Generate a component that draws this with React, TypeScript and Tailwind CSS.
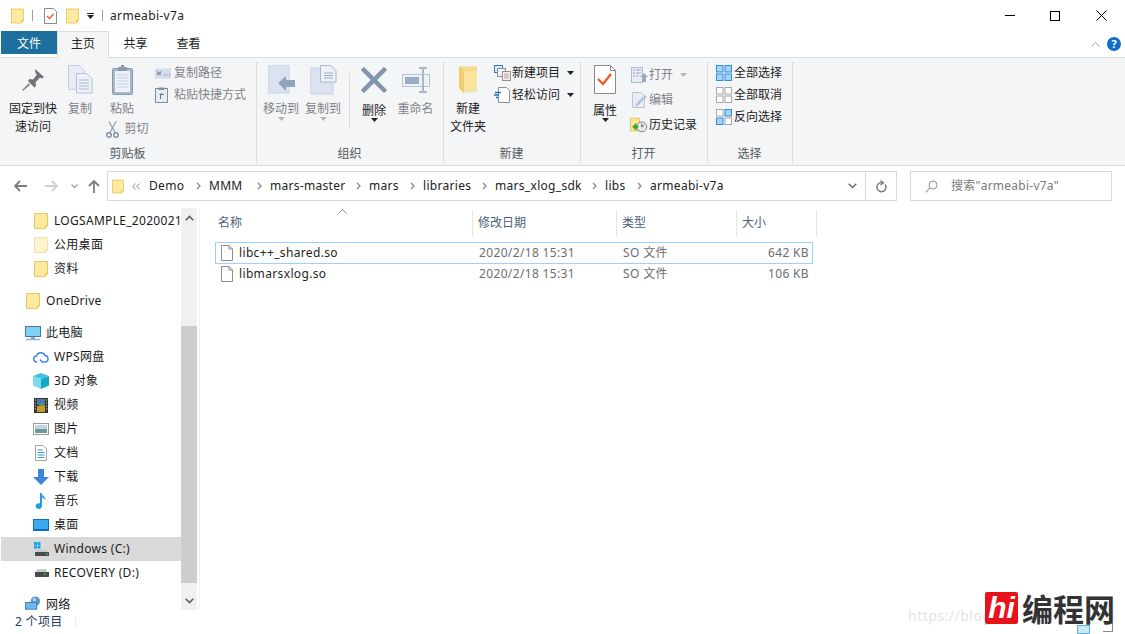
import React from "react";

const Folder = ({ w = 14, h = 16, pale = false }: { w?: number; h?: number; pale?: boolean }) => (
  <svg width={w} height={h} viewBox="0 0 14 16" className="shrink-0">
    <path d="M.5.5h13v12.5h-2v2.5H.5z" fill={pale ? "#fdf3cf" : "#fde9a0"} stroke={pale ? "#f0e2b0" : "#e9c65c"} />
    <path d="M11.5 13h2v-1h-2z M11.5 13v2.5L13.5 13z" fill={pale ? "#f0e2b0" : "#e9c65c"} />
  </svg>
);

const Caret = ({ c = "#222" }: { c?: string }) => (
  <svg width="7" height="4" viewBox="0 0 7 4"><path d="M0 0h7L3.5 4z" fill={c} /></svg>
);

const Pin = () => (
  <svg width="24" height="24" viewBox="0 0 24 24">
    <path d="M14 1l9 8-2 1.500-2-1-4.500 5 .5 3.500-1.500 1.500L7 13l1.500-2 3.500.5 4-5-1.500-1.500z" fill="#6f7278" />
    <path d="M8 15L1 22l1 1 7-6z" fill="#8a8c90" />
  </svg>
);
const CopyBig = () => (
  <svg width="25" height="29" viewBox="0 0 25 29">
    <path d="M.5.5h11l5 5v19H.5z" fill="#e8edf5" stroke="#c6d0e0" />
    <path d="M8.500 8.500h10l5.500 5v14.500H8.500z" fill="#eef2f8" stroke="#b5c1d4" />
    <path d="M11 15h10M11 18h10M11 21h10M11 24h10" stroke="#aab8cc" />
  </svg>
);
const Paste = () => (
  <svg width="21" height="30" viewBox="0 0 21 30">
    <rect x=".5" y="3.500" width="20" height="26" rx="1" fill="#a9b7cb" stroke="#8a9ab2" />
    <rect x="3" y="6" width="15" height="21" fill="#eef2f8" />
    <path d="M5 10h11M5 13h11M5 16h11M5 19h11M5 22h11" stroke="#c6d0e0" />
    <rect x="6" y="2" width="9" height="4" fill="#8a9ab2" />
    <rect x="9" y="0" width="3" height="3" fill="#8a9ab2" />
  </svg>
);
const Scissors = () => (
  <svg width="13" height="17" viewBox="0 0 13 17" fill="none">
    <path d="M3 .5l6 11M10 .5L4 11.500" stroke="#9aa2ae" strokeWidth="1.300" />
    <circle cx="3" cy="14" r="2.300" stroke="#7f8fa8" strokeWidth="1.400" />
    <circle cx="10" cy="14" r="2.300" stroke="#7f8fa8" strokeWidth="1.400" />
  </svg>
);
const PathIcon = () => (
  <svg width="16" height="11" viewBox="0 0 16 11">
    <rect width="16" height="10" y=".5" fill="#d3dced" />
    <path d="M2 3l1 4 1-3 1 3 1-4" stroke="#6f7c92" fill="none" strokeWidth=".7" />
    <path d="M9 7h1M11.500 7h1M14 7h1" stroke="#6f7c92" />
  </svg>
);
const ShortcutPaste = () => (
  <svg width="13" height="16" viewBox="0 0 13 16">
    <rect x=".5" y="1.500" width="12" height="14" fill="#e8edf5" stroke="#7f8da3" />
    <rect x="3.500" y=".5" width="6" height="2.500" fill="#7f8da3" />
    <path d="M5 12V8H4l3-2.500V7h2v1H6v4z" fill="#66758c" />
  </svg>
);
const MoveTo = () => (
  <svg width="27" height="30" viewBox="0 0 27 30">
    <rect x="0" y="0" width="21" height="28" fill="#dbe3f0" stroke="#c8d2e2" />
    <path d="M10 18l8-7v4h9v7h-9v4z" fill="#8fa3bf" />
  </svg>
);
const CopyTo = () => (
  <svg width="27" height="30" viewBox="0 0 27 30">
    <rect x="0" y="3" width="23" height="26" fill="#dbe3f0" stroke="#c8d2e2" />
    <path d="M10.500.5h10l5.500 5V17H10.500z" fill="#eef2f8" stroke="#aab8cc" />
    <path d="M14 8h9M14 10.500h9M14 13h9" stroke="#9cacc3" />
  </svg>
);
const Del = () => (
  <svg width="26" height="26" viewBox="0 0 26 26"><path d="M3 3l20 20M23 3L3 23" stroke="#8494ad" strokeWidth="4.500" strokeLinecap="square" /></svg>
);
const Rename = () => (
  <svg width="28" height="26" viewBox="0 0 28 26" fill="none">
    <rect x=".5" y="7.500" width="27" height="12" fill="#eef2f8" stroke="#b7c4d8" />
    <rect x="3" y="10" width="14" height="7" fill="#9aabc4" />
    <path d="M17 1h8M21 1v24M17 25h8" stroke="#a9b7cb" strokeWidth="2" />
  </svg>
);
const NewFolder = () => (
  <svg width="21" height="28" viewBox="0 0 21 28">
    <path d="M2 .5h17v24H6z" fill="#f6dc8a" />
    <path d="M2 .5L6 5v22.500L1 22V1z" fill="#f0cf6c" />
    <path d="M6 5l13-.5V24.500H6z" fill="#fbe7a4" opacity=".7" />
    <path d="M8 24.500h11l-2 2H6z" fill="#efe2bb" />
  </svg>
);
const NewItem = () => (
  <svg width="17" height="16" viewBox="0 0 17 16" fill="none">
    <rect x=".5" y=".5" width="8" height="7" fill="#dbe9f6" stroke="#3b78b8" />
    <rect x="3.500" y="3.500" width="8" height="8" fill="#eef2f6" stroke="#8a8f98" />
    <rect x="8.500" y="6.500" width="8" height="9" fill="#f3f4f6" stroke="#9a8f8a" />
    <path d="M10 9h5M10 11h5M10 13h5" stroke="#b89a8a" />
  </svg>
);
const EasyAccess = () => (
  <svg width="16" height="16" viewBox="0 0 16 16" fill="none">
    <path d="M4.500.5h8l3 3v12h-11z" fill="#fff" stroke="#8a8f98" />
    <path d="M1 5.500h6M0 8h5M2 10.500h2" stroke="#1d6fc4" strokeWidth="1.300" />
  </svg>
);
const Props = () => (
  <svg width="22" height="29" viewBox="0 0 22 29" fill="none">
    <path d="M.5.5h16l5 5v23H.5z" fill="#fff" stroke="#8b8b8b" />
    <path d="M16.500.5v5h5" stroke="#8b8b8b" />
    <path d="M4 14l5 5 8-10" stroke="#f0582a" strokeWidth="2.400" />
  </svg>
);
const OpenIc = () => (
  <svg width="17" height="16" viewBox="0 0 17 16" fill="none">
    <rect x=".5" y=".5" width="11" height="15" fill="#e8edf5" stroke="#b0bdd0" />
    <path d="M2 3h2M2 6h2M2 9h2M5 3h5M5 6h5M5 9h3" stroke="#95a6bf" />
    <path d="M13 6l4 4h-2v5h-4v-5H9z" fill="#9aaac2" />
  </svg>
);
const EditIc = () => (
  <svg width="15" height="16" viewBox="0 0 15 16" fill="none">
    <path d="M.5.5h9l3 3v12H.5z" fill="#e8edf5" stroke="#bac7d9" />
    <path d="M3 13L13 3l2 1.500L5 14.500z" fill="#b3c2d8" />
  </svg>
);
const HistIc = () => (
  <svg width="21" height="16" viewBox="0 0 21 16" className="mt-px">
    <path d="M.5.5h10v14H.5z" fill="#fde79a" stroke="#e5bf4c" />
    <circle cx="13" cy="10" r="5.500" fill="#e7e7e7" stroke="#7d7d7d" />
    <path d="M13 6.500V10l2.500-1.500" stroke="#555" fill="none" />
    <path d="M2.500 10L7 5.500v2.800h2v3.400H7v2.800z" fill="#3aa82e" />
  </svg>
);
const Grid4 = ({ on }: { on: boolean[] }) => (
  <svg width="16" height="16" viewBox="0 0 16 16">
    {[[0, 0], [8.5, 0], [0, 8.5], [8.5, 8.5]].map(([x, y], i) => (
      <rect key={i} x={x + 0.5} y={y + 0.5} width="6.500" height="6.500" fill={on[i] ? "#a6d3f5" : "#fff"} stroke={on[i] ? "#2b8fe0" : "#a8a8a8"} />
    ))}
  </svg>
);

const Arrow = ({ c, flip }: { c: string; flip?: boolean }) => (
  <svg width="14" height="12" viewBox="0 0 14 12" className={flip ? "rotate-180" : ""}>
    <path d="M1 6h12M6 1L1 6l5 5" stroke={c} strokeWidth="1.800" fill="none" />
  </svg>
);
const Chev = () => (
  <svg width="5" height="8" viewBox="0 0 5 8" className="shrink-0"><path d="M1 1l3 3-3 3" stroke="#8a8a8a" strokeWidth="1.300" fill="none" /></svg>
);
const FileIc = () => (
  <svg width="12" height="16" viewBox="0 0 12 16" className="shrink-0" fill="none">
    <path d="M.5.5h7.500l3.500 3.500v11.500H.5z" fill="#fff" stroke="#8e8e8e" />
    <path d="M8 .5V4h3.500" stroke="#8e8e8e" />
  </svg>
);

const PC = () => (
  <svg width="16" height="15" viewBox="0 0 16 15"><rect x=".5" y=".5" width="15" height="10" fill="#7fd0f7" stroke="#3b7ea8" /><path d="M6 11h4v2H6z" fill="#8fa5b5" /><path d="M1 13.500h14" stroke="#9ab0c0" strokeWidth="1.500" /></svg>
);
const Cloud = () => (
  <svg width="16" height="12" viewBox="0 0 16 12" fill="none"><path d="M4 11a3 3 0 0 1-.5-6A4.500 4.500 0 0 1 12 4.500 3.300 3.300 0 0 1 12.500 11H9L7 8.500" stroke="#3d86ee" strokeWidth="1.500" /></svg>
);
const Cube = () => (
  <svg width="16" height="16" viewBox="0 0 16 16"><path d="M0 3v9.500L8 16V6z" fill="#7fdbe8" /><path d="M8 6v10l8-3.500V3z" fill="#12a8c8" /><path d="M0 3l8 3 8-3-8-3z" fill="#3cc4dc" /></svg>
);
const Film = () => (
  <svg width="14" height="15" viewBox="0 0 14 15"><rect width="14" height="15" fill="#333" /><rect x="3" y="1" width="8" height="6" fill="#4a76b0" /><rect x="3" y="8" width="8" height="6" fill="#c89a2e" /><path d="M5 8l3-4 3 4z" fill="#5f9a4a" /><path d="M1 2h1M1 5h1M1 8h1M1 11h1M12 2h1M12 5h1M12 8h1M12 11h1" stroke="#ddd" /></svg>
);
const Pic = () => (
  <svg width="16" height="12" viewBox="0 0 16 12"><rect x=".5" y=".5" width="15" height="11" fill="#fff" stroke="#9a9a9a" /><rect x="2" y="2" width="12" height="4" fill="#bcd5e5" /><rect x="2" y="6" width="12" height="4" fill="#6f9a92" /></svg>
);
const Doc = () => (
  <svg width="12" height="16" viewBox="0 0 12 16" fill="none"><path d="M.5.5h7.500l3.500 3.500v11.500H.5z" fill="#fff" stroke="#a5a5a5" /><path d="M2.500 5h5M2.500 7.500h7M2.500 10h7M2.500 12.500h7" stroke="#3d9ad8" /></svg>
);
const Down = () => (
  <svg width="16" height="16" viewBox="0 0 16 16"><path d="M5 0h6v8h5l-8 8-8-8h5z" fill="#3c86d8" /></svg>
);
const Note = () => (
  <svg width="12" height="16" viewBox="0 0 12 16"><path d="M5 0h1.500c.5 3 4.500 3.500 4 7.500-.8-2-2.500-2.700-3.500-3V13a3.200 2.800 0 1 1-2-2.500z" fill="#1f9ceb" /></svg>
);
const Desk = () => (
  <svg width="16" height="12" viewBox="0 0 16 12"><rect width="16" height="12" fill="#0f6fb8" /><rect x="1" y="1" width="14" height="9" fill="#3aa9ef" /></svg>
);
const WinDrive = () => (
  <svg width="15" height="15" viewBox="0 0 15 15"><path d="M0 0h3v3H0zM3.500 0h3v3h-3zM0 3.500h3v3H0zM3.500 3.500h3v3h-3z" fill="#19a3e8" /><path d="M2 10l1-2h10l1 2z" fill="#c8c8c8" /><rect x="1" y="10" width="14" height="4" fill="#4a4a4a" /><rect x="12" y="11.500" width="1.500" height="1.500" fill="#4fd64f" /></svg>
);
const Drive = () => (
  <svg width="15" height="9" viewBox="0 0 15 9"><path d="M2 3l1-3h9l1 3z" fill="#c8c8c8" /><rect x="1" y="3" width="14" height="5" fill="#4a4a4a" /><rect x="10" y="4.500" width="1.500" height="1.500" fill="#4fd64f" /></svg>
);
const Net = () => (
  <svg width="17" height="15" viewBox="0 0 17 15"><circle cx="11" cy="5" r="5" fill="#5a97c4" /><circle cx="10" cy="3.500" r="2" fill="#a5cde8" /><rect x=".5" y="6.500" width="12" height="7" fill="#6db9ef" stroke="#3a7db5" /></svg>
);

const Big = ({ w, icon, lines, dim, caret, caretC, low, tail }: { w: number; icon: React.ReactNode; lines: string[]; dim?: boolean; caret?: boolean; caretC?: string; low?: boolean; tail?: React.ReactNode }) => (
  <div className="flex flex-col items-center shrink-0" style={{ width: w }}>
    <div className={`h-[38px] pb-[3px] flex items-center justify-center ${low ? "mb-[2px]" : ""}`}>{icon}</div>
    {lines.map((l) => (
      <div key={l} className={`leading-[18px] whitespace-nowrap ${dim ? "text-[#7f8389]" : "text-[#222]"}`}>{l}</div>
    ))}
    {caret && <div className={`h-[4px] flex items-center ${low ? "-mt-[2px]" : "-mt-[1px]"}`}><Caret c={caretC ?? "#222"} /></div>}
    {tail}
  </div>
);

const Small = ({ icon, text, dim, h = 22, iw, caret, cm, cc, left }: { icon: React.ReactNode; text: string; dim?: boolean; h?: number; iw: number; caret?: boolean; cm?: string; cc?: string; left?: boolean }) => (
  <div className={`flex items-center whitespace-nowrap ${dim ? "text-[#7f8389]" : "text-[#222]"}`} style={{ height: h }}>
    <span className={`flex items-center shrink-0 ${left ? "justify-start" : "justify-center"}`} style={{ width: iw }}>{icon}</span>
    <span>{text}</span>
    {caret && <span className={`${cm} flex`}><Caret c={cc ?? "#222"} /></span>}
  </div>
);

const Group = ({ w, label, children }: { w: number; label: string; children: React.ReactNode }) => (
  <div className="h-full shrink-0 border-r border-[#dcdddf] flex flex-col" style={{ width: w }}>
    <div className="flex-1 flex min-h-0">{children}</div>
    <div className="h-[18px] leading-[18px] text-center pr-px text-[#555a60]">{label}</div>
  </div>
);

const Side = ({ icon, text, lvl = 2, sel, mt, last }: { icon: React.ReactNode; text: string; lvl?: number; sel?: boolean; mt?: boolean; last?: boolean }) => (
  <div className={`shrink-0 flex whitespace-nowrap ${last ? "h-[18px] items-end" : "h-[24px] items-center"} ${sel ? "bg-[#d9d9d9] ml-px" : ""} ${mt ? "mt-[8px]" : ""}`}>
    <span className={`shrink-0 flex items-center justify-center w-[16px] ${lvl === 1 ? (sel ? "ml-[24px]" : "ml-[25px]") : sel ? "ml-[32px]" : "ml-[33px]"}`}>{icon}</span>
    <span className={`ml-[5px] tracking-[0.3px] ${last ? "leading-[12px]" : ""}`}>{text}</span>
  </div>
);

const crumbs: [string, number][] = [
  ["Demo", 47],
  ["MMM", 48],
  ["mars-master", 86],
  ["mars", 41],
  ["libraries", 59],
  ["mars_xlog_sdk", 97],
  ["libs", 32],
];

const Row = ({ name, size, sel }: { name: string; size: string; sel?: boolean }) => (
  <div className={`w-[598px] flex items-center border ${sel ? "h-[22px] border-[#99d1ff]" : "h-[20px] border-transparent"}`}>
    <div className="w-[257px] flex items-center text-[#1f1f1f]">
      <span className="ml-[5px]"><FileIc /></span>
      <span className="ml-[6px] tracking-[0.35px]">{name}</span>
    </div>
    <div className="w-[144px] pl-[6px] text-[#6d6d6d] tracking-[0.35px]">2020/2/18 15:31</div>
    <div className="w-[120px] pl-[6px] text-[#6d6d6d] tracking-[0.35px]">SO 文件</div>
    <div className="flex-1 text-right pr-[3px] text-[#6d6d6d] tracking-[0.35px]">{size}</div>
  </div>
);

const Head = ({ w, t, pl }: { w: number; t: string; pl: string }) => (
  <div className={`h-[26px] shrink-0 border-r border-[#e5e5e5] ${pl} flex items-center text-[#4d6078]`} style={{ width: w }}>{t}</div>
);

export default function App() {
  return (
    <div className="relative w-[1125px] h-[634px] overflow-hidden bg-white text-[12px] leading-[18px] text-[#1a1a1a] flex flex-col" style={{ fontFamily: '"Noto Sans","Noto Sans CJK SC",sans-serif' }}>
      {/* title bar */}
      <div className="h-[31px] shrink-0 flex items-center">
        <span className="ml-[11px]"><Folder w={13} h={16} /></span>
        <span className="ml-[8px] w-px h-[11px] bg-[#a0a0a0]" />
        <svg width="13" height="16" viewBox="0 0 13 16" className="ml-[11px]" fill="none"><path d="M.5.5h9l3 3v12H.5z" fill="#fff" stroke="#8b8b8b" /><path d="M3 8l2.500 2.500L9.500 6" stroke="#f0582a" strokeWidth="1.300" /></svg>
        <span className="ml-[9px]"><Folder w={13} h={16} /></span>
        <span className="ml-[8px] flex flex-col items-center gap-[1px]"><span className="w-[7px] h-px bg-[#222]" /><Caret /></span>
        <span className="ml-[8px] w-px h-[11px] bg-[#a0a0a0]" />
        <span className="ml-[7px] tracking-[0.35px] text-[#222]">armeabi-v7a</span>
        <div className="ml-auto flex items-center h-full">
          <span className="w-[10px] h-px bg-black mr-[35px]" />
          <span className="w-[10px] h-[10px] border border-black mr-[36px]" />
          <svg width="11" height="11" viewBox="0 0 11 11" className="mr-[18px]"><path d="M.5.5l10 10M10.500.5l-10 10" stroke="#000" /></svg>
        </div>
      </div>
      {/* tabs */}
      <div className="h-[26px] shrink-0 flex items-start relative z-10">
        <div className="ml-px w-[56px] h-[23px] bg-[#1d6f9e] text-white text-center leading-[25px]">文件</div>
        <div className="w-[52px] h-[27px] bg-[#f4f5f7] border border-b-0 border-[#dcdddf] text-center leading-[24px] text-[#222]">主页</div>
        <div className="w-[53px] text-center leading-[25px] text-[#222]">共享</div>
        <div className="w-[53px] text-center leading-[25px] text-[#222]">查看</div>
        <div className="ml-auto flex items-center h-[26px]">
          <svg width="9" height="5" viewBox="0 0 9 5" className="mr-[7px]" fill="none"><path d="M.5 4.500l4-4 4 4" stroke="#a8a8a8" /></svg>
          <span className="w-[14px] h-[14px] rounded-full bg-[#0f6fc6] text-white text-[11px] leading-[14px] text-center font-bold mr-[4px]">?</span>
        </div>
      </div>
      {/* ribbon */}
      <div className="h-[109px] shrink-0 bg-[#f4f5f7] border-y border-[#dcdddf] pt-[4px] pb-[2px] flex">
        <Group w={257} label="剪贴板">
          <Big w={66} icon={<Pin />} lines={["固定到快", "速访问"]} />
          <Big w={28} icon={<CopyBig />} lines={["复制"]} dim />
          <Big
            w={56}
            icon={<Paste />}
            lines={["粘贴"]}
            dim
            tail={
              <div className="mt-[2px] ml-[11px] h-[18px] flex items-center gap-[5px] text-[#7f8389] whitespace-nowrap"><Scissors /><span>剪切</span></div>
            }
          />
          <div className="ml-[5px] flex flex-col">
            <Small left iw={19} icon={<PathIcon />} text="复制路径" dim />
            <Small left iw={19} icon={<ShortcutPaste />} text="粘贴快捷方式" dim />
          </div>
        </Group>
        <Group w={187} label="组织">
          <div className="ml-[3px] flex">
            <Big w={42} icon={<MoveTo />} lines={["移动到"]} dim caret caretC="#b5b5b5" />
            <Big w={42} icon={<CopyTo />} lines={["复制到"]} dim caret caretC="#b5b5b5" />
          </div>
          <span className="ml-[5px] mt-[11px] w-px h-[55px] bg-[#dcdddf]" />
          <Big w={48} low icon={<Del />} lines={["删除"]} caret />
          <Big w={35} icon={<Rename />} lines={["重命名"]} dim />
        </Group>
        <Group w={137} label="新建">
          <Big w={48} icon={<NewFolder />} lines={["新建", "文件夹"]} />
          <div className="flex flex-col">
            <Small iw={20} icon={<NewItem />} text="新建项目" caret cm="ml-[7px]" />
            <Small iw={20} icon={<EasyAccess />} text="轻松访问" caret cm="ml-[7px]" />
          </div>
        </Group>
        <Group w={127} label="打开">
          <Big w={48} low icon={<Props />} lines={["属性"]} caret />
          <div className="flex flex-col ml-[1px]">
            <Small h={25} iw={19} icon={<OpenIc />} text="打开" dim caret cm="ml-[7px]" cc="#b5b5b5" />
            <Small h={25} iw={19} icon={<EditIc />} text="编辑" dim />
            <Small h={25} iw={19} icon={<HistIc />} text="历史记录" />
          </div>
        </Group>
        <Group w={85} label="选择">
          <div className="ml-[6px] flex flex-col">
            <Small iw={20} icon={<Grid4 on={[true, true, true, true]} />} text="全部选择" />
            <Small iw={20} icon={<Grid4 on={[false, false, false, false]} />} text="全部取消" />
            <Small iw={20} icon={<Grid4 on={[false, true, true, false]} />} text="反向选择" />
          </div>
        </Group>
      </div>
      {/* address row */}
      <div className="h-[39px] shrink-0 flex items-start pt-[5px]">
        <div className="w-[107px] h-[30px] flex items-center shrink-0">
          <span className="ml-[14px]"><Arrow c="#7e7e7e" /></span>
          <span className="ml-[16px]"><Arrow c="#cfcfcf" flip /></span>
          <svg width="7" height="5" viewBox="0 0 7 5" className="ml-[13px]" fill="none"><path d="M.5.500l3 3 3-3" stroke="#9a9a9a" strokeWidth="1.200" /></svg>
          <svg width="12" height="13" viewBox="0 0 12 13" className="ml-[10px]" fill="none"><path d="M6 13V1M1 6l5-5 5 5" stroke="#7e7e7e" strokeWidth="1.800" /></svg>
        </div>
        <div className="w-[790px] h-[30px] border border-[#d9d9d9] flex items-center shrink-0">
          <span className="ml-[4px]"><Folder w={12} h={15} /></span>
          <svg width="8" height="7" viewBox="0 0 8 7" className="ml-[8px]" fill="none"><path d="M3.500.5L.8 3.500l2.700 3M7.500.5L4.800 3.500l2.700 3" stroke="#8a8a8a" /></svg>
          <div className="ml-[9px] flex items-center">
            {crumbs.map(([t, w]) => (
              <div key={t} className="flex items-center shrink-0" style={{ width: w + 13 }}>
                <span className="tracking-[0.3px] whitespace-nowrap text-[#222]" style={{ width: w }}>{t}</span>
                <Chev />
              </div>
            ))}
            <span className="tracking-[0.3px] whitespace-nowrap text-[#222]">armeabi-v7a</span>
          </div>
          <div className="ml-auto flex items-center h-full">
            <svg width="9" height="6" viewBox="0 0 9 6" className="mr-[8px]" fill="none"><path d="M.7.7l3.800 3.800L8.300.7" stroke="#6e6e6e" strokeWidth="1.500" /></svg>
            <div className="w-[31px] h-full border-l border-[#d9d9d9] flex items-center justify-center">
              <svg width="11" height="13" viewBox="0 0 11 13" fill="none"><path d="M9 4.500a4.500 4.500 0 1 1-3.500-1.800H7" stroke="#7e7e7e" strokeWidth="1.500" /><path d="M4.500.5l3 2.200-3 2.200" stroke="#7e7e7e" strokeWidth="1.300" /></svg>
            </div>
          </div>
        </div>
        <div className="ml-[13px] w-[202px] h-[30px] border border-[#d9d9d9] flex items-center shrink-0">
          <svg width="13" height="13" viewBox="0 0 13 13" className="ml-[14px]" fill="none"><circle cx="8" cy="5" r="4" stroke="#8f8f8f" /><path d="M5 8L.7 12.300" stroke="#b5a08f" strokeWidth="1.200" /></svg>
          <span className="ml-[13px] text-[#7a7a7a] tracking-[0.25px] whitespace-nowrap">搜索"armeabi-v7a"</span>
        </div>
      </div>
      {/* main */}
      <div className="flex-1 min-h-0 flex relative">
        <div className="w-[181px] shrink-0 pt-[4px] flex flex-col text-[#1a1a1a]">
          <Side icon={<Folder />} text="LOGSAMPLE_2020021" />
          <Side icon={<Folder pale />} text="公用桌面" />
          <Side icon={<Folder />} text="资料" />
          <Side mt lvl={1} icon={<Folder />} text="OneDrive" />
          <Side mt lvl={1} icon={<PC />} text="此电脑" />
          <Side icon={<Cloud />} text="WPS网盘" />
          <Side icon={<Cube />} text="3D 对象" />
          <Side icon={<Film />} text="视频" />
          <Side icon={<Pic />} text="图片" />
          <Side icon={<Doc />} text="文档" />
          <Side icon={<Down />} text="下载" />
          <Side icon={<Note />} text="音乐" />
          <Side icon={<Desk />} text="桌面" />
          <Side sel icon={<WinDrive />} text="Windows (C:)" />
          <Side icon={<Drive />} text="RECOVERY (D:)" />
          <Side mt last lvl={1} icon={<Net />} text="网络" />
        </div>
        <div className="w-[16px] shrink-0 mt-[3px] bg-[#f0f0f0] flex flex-col">
          <div className="h-[118px] flex justify-center pt-[7px]">
            <svg width="9" height="6" viewBox="0 0 9 6" fill="none"><path d="M.7 5.300L4.500 1.500l3.800 3.800" stroke="#606060" strokeWidth="1.600" /></svg>
          </div>
          <div className="h-[257px] bg-[#cdcdcd]" />
          <div className="flex-1 flex justify-center items-end pb-[6px]">
            <svg width="9" height="6" viewBox="0 0 9 6" fill="none"><path d="M.7.7l3.800 3.800L8.300.7" stroke="#606060" strokeWidth="1.600" /></svg>
          </div>
        </div>
        <div className="ml-[2px] w-px shrink-0 bg-[#f0f0f0] mt-[3px]" />
        <div className="pl-[15px] pt-[5px] flex-1 relative">
          <div className="flex">
            <Head w={258} t="名称" pl="pl-[3px]" />
            <Head w={144} t="修改日期" pl="pl-[5px]" />
            <Head w={120} t="类型" pl="pl-[5px]" />
            <Head w={80} t="大小" pl="pl-[5px]" />
          </div>
          <svg width="9" height="5" viewBox="0 0 9 5" className="absolute left-[138px] top-[4px]" fill="none"><path d="M.5 4.500l4-4 4 4" stroke="#8a8a8a" /></svg>
          <div className="mt-[6px] flex flex-col">
            <Row sel name="libc++_shared.so" size="642 KB" />
            <Row name="libmarsxlog.so" size="106 KB" />
          </div>
        </div>
      </div>
      {/* status */}
      <div className="h-[24px] shrink-0 flex items-center text-[#1f3a68] relative">
        <span className="ml-[15px] tracking-[0.3px]">2 个项目</span>
        <span className="ml-[13px] w-px h-[12px] bg-[#ececec]" />
      </div>
      {/* watermark */}
      <div className="absolute left-[908px] top-[607px] text-[14px] leading-[18px] text-[#e4e4e4] tracking-[0.5px] whitespace-nowrap">https://blog</div>
      <div className="absolute left-[1077px] top-[625px] w-[13px] h-[9px] bg-[#cbe8f6] border border-[#5ab1dd]" />
      <div className="absolute left-[1103px] top-[622px] w-[10px] h-[10px] border-r border-b border-[#888]" />
      <div className="absolute left-[985px] top-[592px] w-[33px] h-[32px] rounded-[2px] bg-[#e8131a] flex items-center justify-center text-white italic font-bold text-[30px] leading-none" style={{ fontFamily: '"Liberation Sans",sans-serif' }}>
        hi
      </div>
      <div className="absolute left-[1022px] top-[590px] text-[31px] leading-[36px] font-bold text-[#333] whitespace-nowrap" style={{ fontFamily: '"Noto Sans CJK SC",sans-serif' }}>
        编程网
      </div>
    </div>
  );
}
